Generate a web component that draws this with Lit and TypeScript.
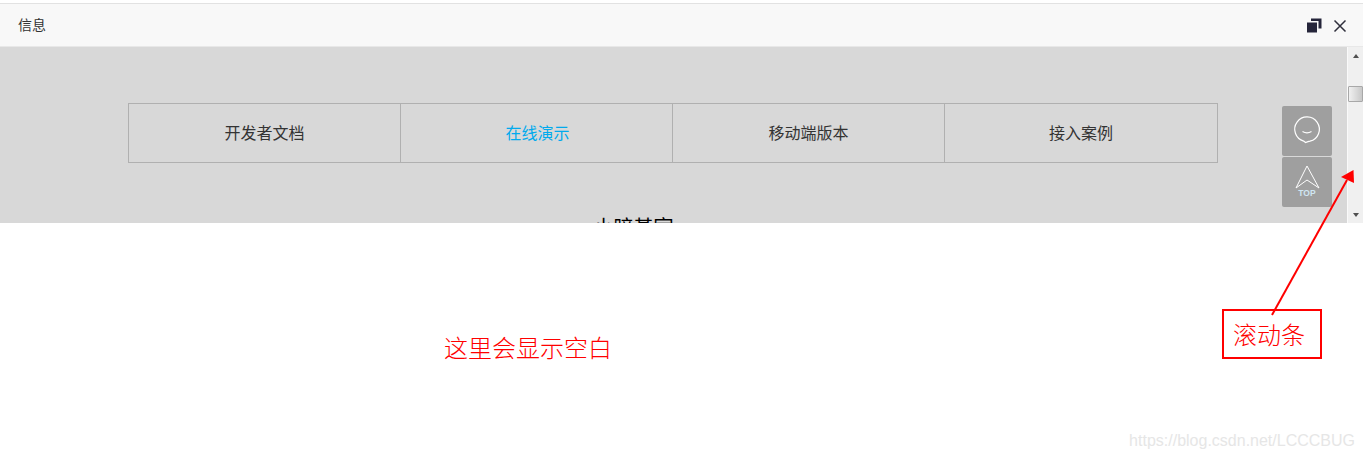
import { LitElement, html, css } from "lit";
import { customElement } from "lit/decorators.js";

@customElement("app-root")
export class AppRoot extends LitElement {
  static styles = css`
    :host { display: block; position: relative; width: 1363px; height: 458px; overflow: hidden; background: #fff; font-family: "Noto Sans CJK SC", "Noto Sans", sans-serif; }
    .dialog { margin-top: 3px; border-top: 1px solid #e2e2e2; height: 219px; display: flex; flex-direction: column; }
    .head { height: 42px; flex: none; background: #f8f8f8; border-bottom: 1px solid #e8e8e8; display: flex; align-items: center; justify-content: space-between; padding: 0 16px 0 18px; font-size: 14px; color: #333; }
    .title { margin-bottom: 2px; }
    .tools { display: flex; align-items: center; gap: 11px; margin-top: 1px; }
    .tools svg { display: block; }
    .main { flex: 1; min-height: 0; display: flex; }
    .content { position: relative; flex: 1; min-width: 0; background: #d8d8d8; overflow: hidden; padding: 56px 129px 0 128px; }
    .nav { display: grid; grid-template-columns: 271px 272px 272px 1fr; border: 1px solid #b0b0b0; height: 60px; box-sizing: border-box; width: 1090px; }
    .nav div { display: flex; align-items: center; justify-content: center; font-size: 16px; color: #333; border-left: 1px solid #b0b0b0; padding-bottom: 2px; box-sizing: border-box; }
    .nav div:first-child { border-left: 0; }
    .nav .on { color: #01aaed; padding-left: 2px; }
    .cut { margin-top: 50px; text-align: center; font-size: 20px; line-height: 28px; color: #000; padding-right: 79px; }
    .float { position: absolute; left: 1282px; top: 59px; display: flex; flex-direction: column; gap: 1px; }
    .float div { width: 50px; height: 50px; background: #9f9f9f; border-radius: 2px; display: flex; align-items: center; justify-content: center; }
    .bar { width: 16px; flex: none; background: #f0f0f0; border-left: 1px solid #fafafa; box-sizing: border-box; display: flex; flex-direction: column; align-items: center; justify-content: space-between; padding: 7px 0 6px; position: relative; }
    .thumb { position: absolute; left: 0; top: 39px; width: 15px; height: 16px; box-sizing: border-box; border: 1px solid #a8a8a8; border-radius: 1px; background: linear-gradient(90deg, #f0f0f0, #c8c8c8); }
    .up { width: 0; height: 0; border: 3.5px solid transparent; border-top: 0; border-bottom: 4px solid #505050; }
    .down { width: 0; height: 0; border: 3.5px solid transparent; border-bottom: 0; border-top: 4px solid #505050; }
    .blank { position: absolute; left: 444px; top: 331px; font-size: 24px; line-height: 32px; color: #f00; font-weight: 300; }
    .label { position: absolute; left: 1222px; top: 309px; width: 100px; height: 50px; box-sizing: border-box; border: 2px solid #f00; padding: 0 6px 2px 0; display: flex; align-items: center; justify-content: center; font-size: 24px; color: #f00; font-weight: 300; }
    .arrow { position: absolute; left: 1260px; top: 160px; }
    .mark { position: absolute; right: 8px; top: 431px; font-family: "Liberation Sans", sans-serif; font-size: 16px; line-height: 20px; color: #e6e6e6; }
  `;

  render() {
    return html`
      <div class="dialog">
        <div class="head">
          <span class="title">信息</span>
          <div class="tools">
            <svg width="15" height="15" viewBox="0 0 15 15" fill="#25253a"><path d="M0 4.500h10v10H0z"/><path d="M4 .5h10.500v10H11.500V3H4z"/></svg>
            <svg width="14" height="14" viewBox="0 0 14 14" fill="none" stroke="#2f2f3c" stroke-width="1.500"><path d="M1.500 1.500l11 11M12.500 1.500l-11 11"/></svg>
          </div>
        </div>
        <div class="main">
          <div class="content">
            <div class="nav">
              <div>开发者文档</div>
              <div class="on">在线演示</div>
              <div>移动端版本</div>
              <div>接入案例</div>
            </div>
            <div class="cut">小暗基室</div>
            <div class="float">
              <div>
                <svg width="30" height="30" viewBox="0 0 30 30" fill="none" stroke="#fff" stroke-width="1.200"><path d="M13.500 26.500l-1.800-1.400A12.300 12.300 0 1 1 18 25.200l-2 .4z"/><path d="M10.500 15.500c2.500 1.500 6.500 1.500 9 0"/></svg>
              </div>
              <div>
                <svg width="30" height="34" viewBox="0 0 30 34" fill="none" stroke="#fff" stroke-width="1"><path d="M15 1L4 23l11-8 12 8z"/><text x="15" y="31" text-anchor="middle" font-family="Liberation Sans, sans-serif" font-size="8.500" font-weight="700" fill="#cfe6f2" stroke="none">TOP</text></svg>
              </div>
            </div>
          </div>
          <div class="bar">
            <span class="up"></span>
            <span class="thumb"></span>
            <span class="down"></span>
          </div>
        </div>
      </div>
      <div class="blank">这里会显示空白</div>
      <div class="label">滚动条</div>
      <svg class="arrow" width="103" height="160" viewBox="0 0 103 160" fill="none">
        <path d="M12 155L87 20" stroke="#f00" stroke-width="2"/>
        <path d="M93.500 10L81 17 94 23z" fill="#f00"/>
      </svg>
      <div class="mark">https://blog.csdn.net/LCCCBUG</div>
    `;
  }
}
